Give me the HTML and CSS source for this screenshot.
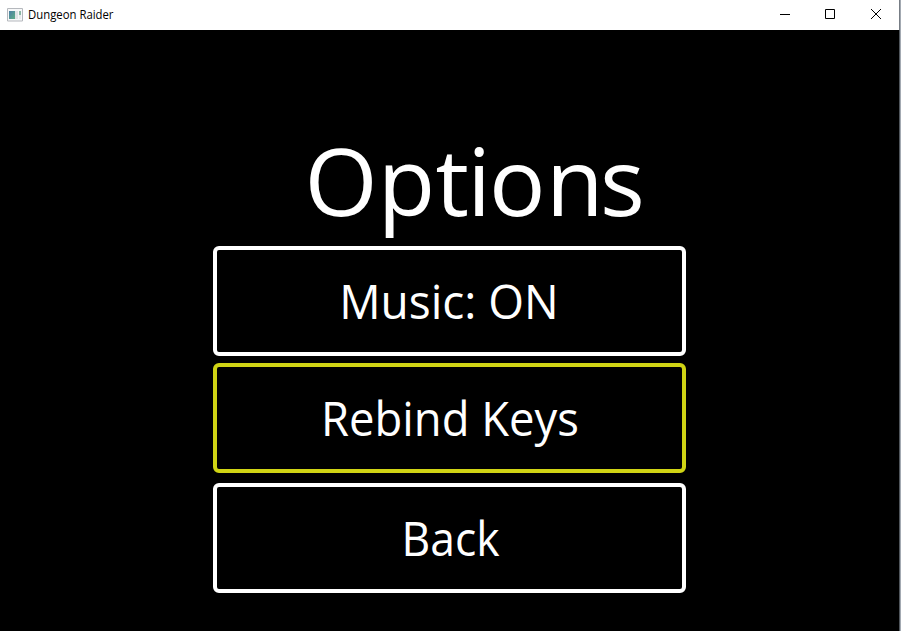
FILE: index.html
```html
<!DOCTYPE html>
<html lang="en">
<head>
<meta charset="utf-8">
<title>Dungeon Raider</title>
<link rel="stylesheet" href="styles.css">
</head>
<body>
<div class="window">
<header class="titlebar">
<svg class="app-icon" width="16" height="14" viewBox="0 0 16 14"><defs><linearGradient id="pane" x1="0" y1="0" x2="1" y2="1"><stop offset="0" stop-color="#4b7fa5"/><stop offset="1" stop-color="#5fae87"/></linearGradient></defs><path d="M.5 .5h15v12.500h-15z" fill="#f7f8f9" stroke="#b5b8bd"/><path d="M2 3h6v8H2z" fill="url(#pane)"/><path d="M8 3h3v8H8z" fill="#dfe3e5"/><path d="M12 3h2v4h-2z" fill="#8bb9a5"/><path d="M12 7h2v4h-2z" fill="#e8eaec"/></svg>
<svg class="title" width="96" height="20"><text x="0" y="14" textLength="85.500" lengthAdjust="spacingAndGlyphs">Dungeon Raider</text></svg>
<div class="controls">
<svg width="11" height="11" viewBox="0 0 11 11"><path d="M0 5.500h10"/></svg>
<svg width="11" height="11" viewBox="0 0 11 11"><path d="M.5 .5h9v9h-9z"/></svg>
<svg width="11" height="11" viewBox="0 0 11 11"><path d="M1 0l10 10M11 0L1 10"/></svg>
</div>
</header>
<main class="screen">
<h1 class="heading"><svg class="label" width="360" height="112"><text x="0.5 73.800 131.500 163.200 185 242 296" y="80">Options</text></svg></h1>
<nav class="menu">
<button class="item"><svg width="465" height="102"><text x="232" y="68.500" textLength="219.500" lengthAdjust="spacingAndGlyphs">Music: ON</text></svg></button>
<button class="item selected"><svg width="465" height="102"><text x="233" y="68.500" textLength="258" lengthAdjust="spacingAndGlyphs">Rebind Keys</text></svg></button>
<button class="item"><svg width="465" height="102"><text x="233.500" y="68.500" textLength="98" lengthAdjust="spacingAndGlyphs">Back</text></svg></button>
</nav>
</main>
</div>
</body>
</html>
```
FILE: styles.css
```css
body{margin:0;background:#000}
.window{width:901px;height:631px;box-sizing:border-box;overflow:hidden;border-right:1px solid #a3aab2;background:#000;font-family:"Open Sans",sans-serif}
.titlebar{height:30px;box-sizing:border-box;border-right:1px solid #777d85;background:#fff;display:flex;align-items:center;padding-left:7px}
.title{font-size:12px;margin-left:5px}
.screen{height:601px;box-sizing:border-box;border-right:1px solid #50565c;overflow:hidden}
.controls{margin-left:auto;display:flex;gap:34px;padding:0 18px 1px 0}
.controls svg{fill:none;stroke:#000}
.heading{margin:106px 0 0 304px;height:110px;font-weight:400}
.label{display:block;fill:#fff;font-size:94px;overflow:visible}
.menu{margin-left:213px;width:473px;display:flex;flex-direction:column}
.item{height:110px;margin:0 0 7px;padding:0;border:4px solid #fff;border-radius:6px;background:#000;font:400 48px "Open Sans",sans-serif}
.item svg{display:block;fill:#fff;text-anchor:middle}
.item.selected{border-color:#d0d414;margin-bottom:10px}
```
